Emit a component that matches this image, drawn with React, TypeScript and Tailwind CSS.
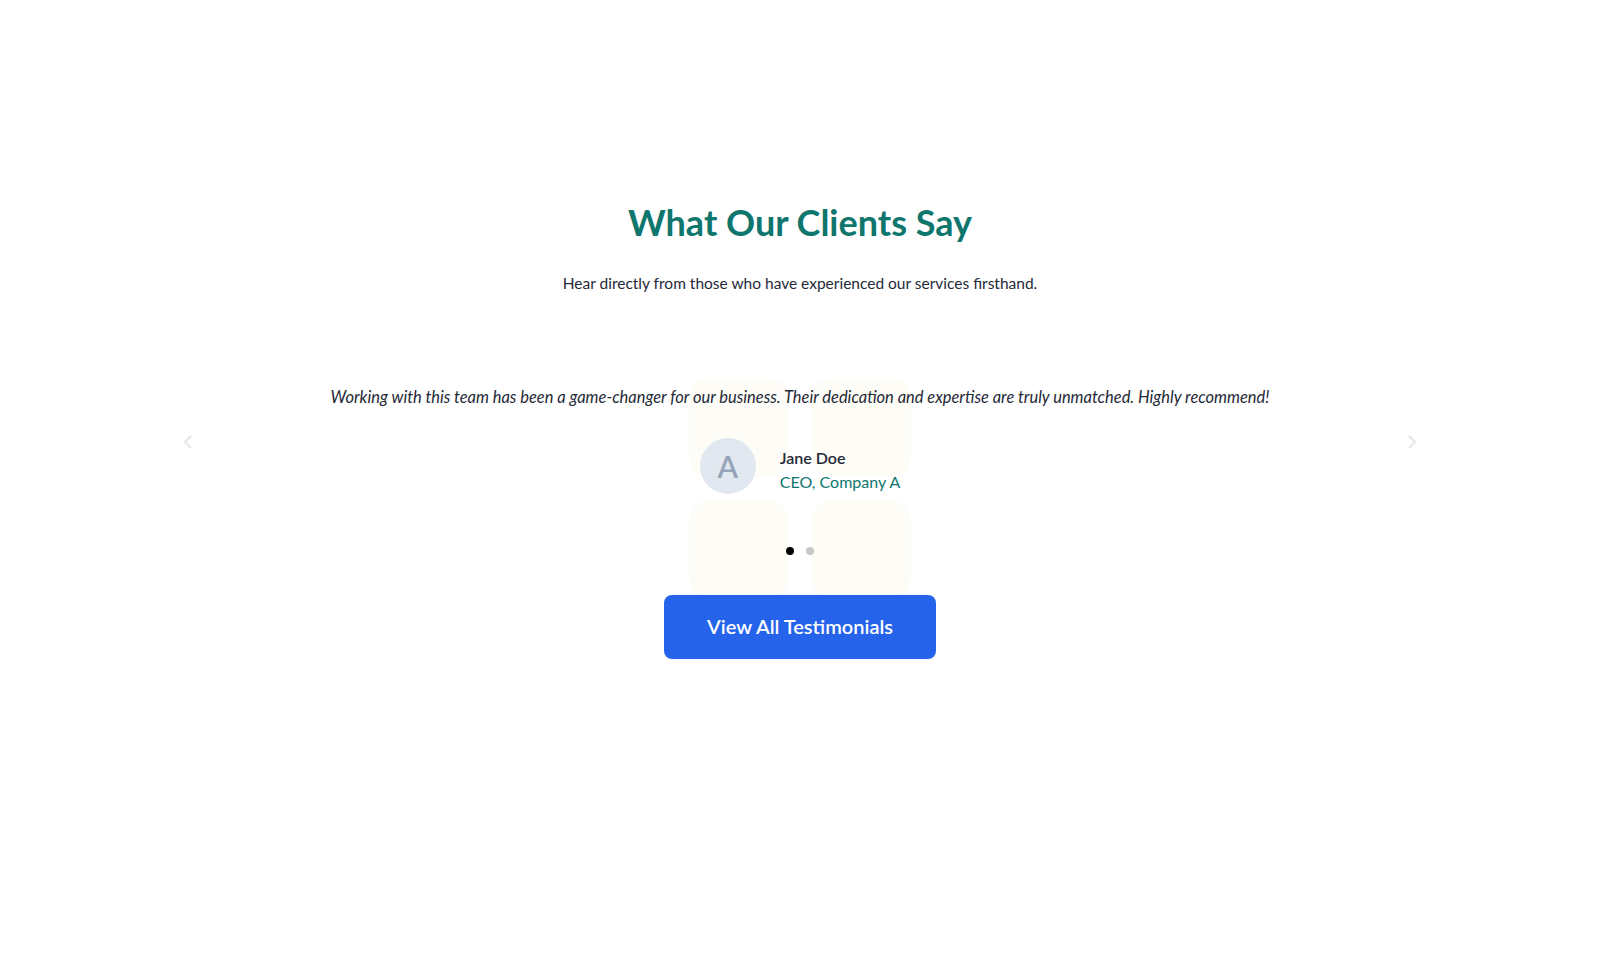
import React from "react";

const font = { fontFamily: '"Lato", "Noto Sans", sans-serif' };

export default function App() {
  return (
    <div className="min-h-screen w-full bg-white" style={font}>
      <section className="flex flex-col items-center pt-[202px]">
        <h2 className="text-[36px] leading-[40px] font-bold text-[#0f766e]">What Our Clients Say</h2>
        <p className="mt-[29px] text-[15.5px] leading-[24px] text-[#1f2937]">
          Hear directly from those who have experienced our services firsthand.
        </p>

        <div className="relative mt-[90px] w-[1240px] flex flex-col items-center">
          <div className="absolute left-1/2 -translate-x-1/2 top-[-7px] grid grid-cols-2 gap-[23px]">
            <div className="w-[99px] h-[99px] rounded-[20px] bg-[#fdfcf6]" />
            <div className="w-[99px] h-[99px] rounded-[20px] bg-[#fdfcf6]" />
            <div className="w-[99px] h-[99px] rounded-[20px] bg-[#fdfcf6]" />
            <div className="w-[99px] h-[99px] rounded-[20px] bg-[#fdfcf6]" />
          </div>

          <button className="absolute left-0 top-[49px] w-[16px] h-[16px] text-[#e5e7eb]">
            <svg width="16" height="16" viewBox="0 0 16 16" fill="none" stroke="currentColor" strokeWidth="2.2" strokeLinecap="round" strokeLinejoin="round">
              <path d="M10.5 2.5 5 8l5.5 5.5" />
            </svg>
          </button>
          <button className="absolute right-0 top-[49px] w-[16px] h-[16px] text-[#e5e7eb]">
            <svg width="16" height="16" viewBox="0 0 16 16" fill="none" stroke="currentColor" strokeWidth="2.2" strokeLinecap="round" strokeLinejoin="round">
              <path d="M5.5 2.5 11 8l-5.5 5.5" />
            </svg>
          </button>

          <p className="relative text-[16.45px] leading-[24px] italic text-[#1f2937]">
            Working with this team has been a game-changer for our business. Their dedication and expertise are truly unmatched. Highly recommend!
          </p>

          <div className="relative mt-[29px] flex items-center gap-6">
            <div className="w-14 h-14 rounded-full bg-[#e2e8f0] flex items-center justify-center text-[30px] font-semibold text-[#94a3b8]">
              A
            </div>
            <div className="flex flex-col pt-[7px]">
              <span className="text-[16px] leading-[24px] font-semibold text-[#1f2937]">Jane Doe</span>
              <span className="text-[16px] leading-[24px] text-[#0f766e]">CEO, Company A</span>
            </div>
          </div>

          <div className="relative mt-[53px] flex items-center gap-3">
            <span className="w-2 h-2 rounded-full bg-black" />
            <span className="w-2 h-2 rounded-full bg-[#c7c7c7]" />
          </div>
        </div>

        <button className="relative mt-[40px] w-[272px] h-[64px] rounded-lg bg-[#2563eb] text-white text-[20px] font-semibold pb-[3px]">
          View All Testimonials
        </button>
      </section>
    </div>
  );
}
